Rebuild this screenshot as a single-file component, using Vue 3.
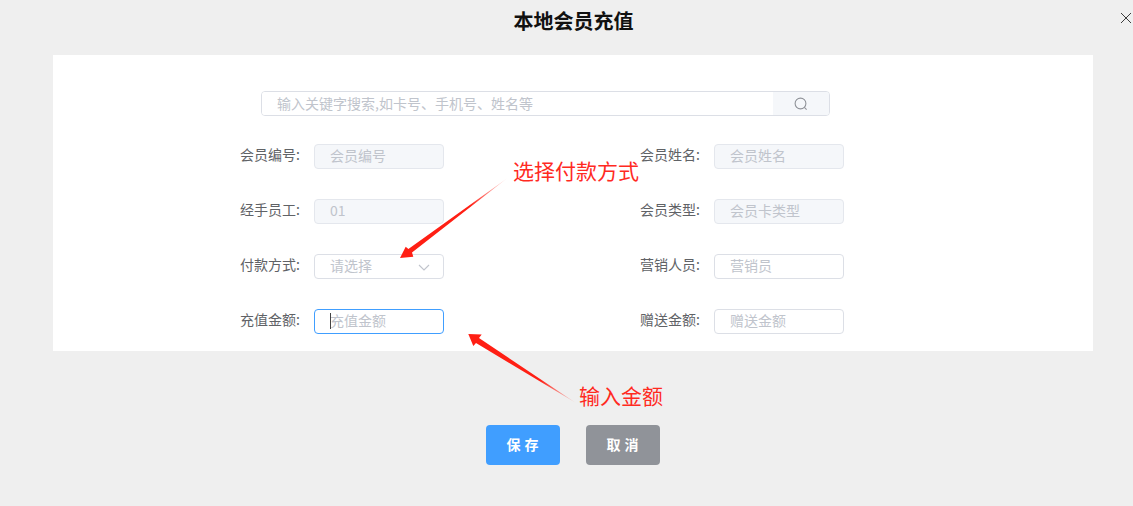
<script setup>
const rows = [
  [
    { label: '会员编号:', placeholder: '会员编号', disabled: true },
    { label: '会员姓名:', placeholder: '会员姓名', disabled: true },
  ],
  [
    { label: '经手员工:', placeholder: '01', disabled: true },
    { label: '会员类型:', placeholder: '会员卡类型', disabled: true },
  ],
  [
    { label: '付款方式:', placeholder: '请选择', select: true },
    { label: '营销人员:', placeholder: '营销员' },
  ],
  [
    { label: '充值金额:', placeholder: '充值金额', focused: true },
    { label: '赠送金额:', placeholder: '赠送金额' },
  ],
]
</script>

<template>
  <div class="dialog">
    <h1 class="title">本地会员充值</h1>
    <svg class="close" width="12" height="12" viewBox="0 0 12 12" aria-label="关闭">
      <path d="M1 1 L11 11 M11 1 L1 11" stroke="#3c3c3c" stroke-width="1" fill="none" />
    </svg>

    <section class="panel">
      <div class="search">
        <input class="search-input" type="text" placeholder="输入关键字搜索,如卡号、手机号、姓名等" />
        <button class="search-btn" type="button" aria-label="搜索">
          <svg width="14" height="14" viewBox="0 0 14 14">
            <circle cx="6.5" cy="6.5" r="5.4" stroke="#909399" stroke-width="1.1" fill="none" />
            <path d="M10.4 10.4 L12.6 12.6" stroke="#909399" stroke-width="1.1" fill="none" />
          </svg>
        </button>
      </div>

      <div class="form">
        <template v-for="(row, r) in rows" :key="r">
          <div v-for="field in row" :key="field.label" class="item">
            <label class="label">{{ field.label }}</label>
            <div class="control">
              <input
                class="input"
                :class="{ focused: field.focused }"
                type="text"
                :placeholder="field.placeholder"
                :disabled="field.disabled"
              />
              <span v-if="field.focused" class="caret"></span>
              <svg v-if="field.select" class="chevron" width="12" height="7" viewBox="0 0 12 7">
                <path d="M1 1 L6 6 L11 1" stroke="#c0c4cc" stroke-width="1.1" fill="none" />
              </svg>
            </div>
          </div>
        </template>
      </div>
    </section>

    <div class="actions">
      <button class="btn primary" type="button">保存</button>
      <button class="btn muted" type="button">取消</button>
    </div>

    <svg class="marks" width="1133" height="506" viewBox="0 0 1133 506">
      <defs>
        <linearGradient id="fade1" gradientUnits="userSpaceOnUse" x1="507" y1="178" x2="470" y2="206">
          <stop offset="0" stop-color="#ff2a1f" stop-opacity="0.1" />
          <stop offset="1" stop-color="#ff1f14" />
        </linearGradient>
        <linearGradient id="fade2" gradientUnits="userSpaceOnUse" x1="576" y1="403" x2="540" y2="380">
          <stop offset="0" stop-color="#ff2a1f" stop-opacity="0.1" />
          <stop offset="1" stop-color="#ff1f14" />
        </linearGradient>
      </defs>
      <polygon points="400,258 405.7,246.7 408.4,249 507.5,178 412,252.5 413.3,256.7" fill="url(#fade1)" />
      <polygon points="468.3,334 481.7,334.5 479,338 576,403 476,343 473.3,346" fill="url(#fade2)" />
    </svg>
    <span class="note note-pay">选择付款方式</span>
    <span class="note note-amount">输入金额</span>
  </div>
</template>

<style>
html, body { margin: 0; padding: 0; background: #efefef; }
</style>

<style scoped>
.dialog {
  position: relative;
  width: 1133px;
  height: 506px;
  overflow: hidden;
  background: #efefef;
  font-family: "Noto Sans CJK SC", "Liberation Sans", sans-serif;
  font-size: 14px;
  color: #606266;
}
.title {
  margin: 0;
  height: 55px;
  padding: 6px 0 0 14px;
  box-sizing: border-box;
  font-size: 20px;
  line-height: 30px;
  font-weight: 700;
  color: #111;
  text-align: center;
}
.close { position: absolute; left: 1120px; top: 12px; }
.panel {
  margin: 0 40px 0 53px;
  height: 296px;
  box-sizing: border-box;
  padding: 36px 0 0 187px;
  background: #fff;
}
.search {
  display: flex;
  width: 569px;
  height: 25px;
  margin-left: 21px;
  box-sizing: border-box;
  border: 1px solid #dcdfe6;
  border-radius: 4px;
  overflow: hidden;
}
.search-input {
  flex: 1;
  min-width: 0;
  border: 0;
  outline: 0;
  padding: 0 15px 2px;
  font: inherit;
  background: #fff;
}
.search-input::placeholder, .input::placeholder { color: #c0c4cc; opacity: 1; }
.search-btn {
  width: 56px;
  border: 0;
  padding: 0;
  background: #f5f7fa;
  display: flex;
  align-items: center;
  justify-content: center;
}
.form {
  display: grid;
  grid-template-columns: 400px 204px;
  row-gap: 30px;
  margin-top: 28px;
}
.item { display: flex; align-items: center; height: 25px; }
.label {
  width: 60px;
  height: 25px;
  margin-right: 14px;
  text-align: right;
  white-space: nowrap;
  line-height: 21px;
}
.control { position: relative; width: 130px; height: 25px; }
.input {
  display: block;
  width: 100%;
  height: 100%;
  box-sizing: border-box;
  border: 1px solid #dcdfe6;
  border-radius: 4px;
  outline: 0;
  padding: 0 15px 3px;
  font: inherit;
  background: #fff;
  color: #606266;
}
.input:disabled { background: #f5f7fa; border-color: #e4e7ed; }
.input.focused { border-color: #409eff; }
.caret {
  position: absolute;
  left: 16px;
  top: 4px;
  width: 1px;
  height: 16px;
  background: #444;
}
.chevron { position: absolute; left: 104px; top: 10px; }
.actions {
  display: flex;
  justify-content: flex-start;
  gap: 26px;
  margin: 74px 0 0 486px;
}
.btn {
  width: 74px;
  height: 40px;
  padding: 0 0 2px 3px;
  border: 0;
  border-radius: 4px;
  color: #fff;
  font: inherit;
  font-size: 14px;
  font-weight: 700;
  letter-spacing: 4px;
}
.primary { background: #409eff; }
.muted { background: #909399; }
.marks { position: absolute; left: 0; top: 0; pointer-events: none; }
.note {
  position: absolute;
  font-size: 21px;
  line-height: 30px;
  color: #ff2a1f;
  white-space: nowrap;
}
.note-pay { left: 513px; top: 155px; }
.note-amount { left: 579px; top: 380px; }
</style>
